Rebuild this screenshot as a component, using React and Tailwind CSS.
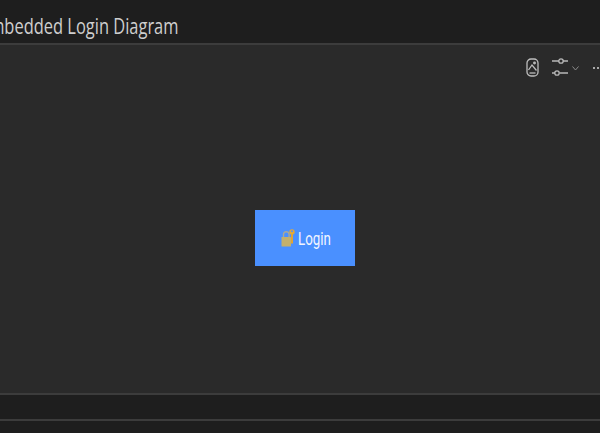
function PreviewIcon() {
  return (
    <svg width="13" height="19" viewBox="0 0 13 19" fill="none" stroke="#bdbdbd" strokeWidth="1.3">
      <rect x="1" y="1" width="11" height="17" rx="4" />
      <path d="M2.5 12 L6 7 L10.5 12.5" />
      <path d="M3.5 15 h6" />
      <circle cx="8.5" cy="5" r="0.8" />
    </svg>
  );
}

function SlidersIcon() {
  return (
    <svg width="16" height="18" viewBox="0 0 16 18" fill="none" stroke="#b8b8b8" strokeWidth="1.3">
      <path d="M0 3 H7 M11 3 H16" />
      <circle cx="9" cy="3" r="2.2" />
      <path d="M0 15 H3 M7.5 15 H16" />
      <circle cx="5" cy="15" r="2.2" />
    </svg>
  );
}

function ChevronIcon() {
  return (
    <svg width="7" height="5" viewBox="0 0 7 5" fill="none" stroke="#8a8a8a" strokeWidth="1">
      <path d="M0.5 0.5 L3.5 4 L6.5 0.5" />
    </svg>
  );
}

function LockKeyIcon() {
  return (
    <svg width="14" height="18" viewBox="0 0 14 18" className="shrink-0">
      <path d="M2.5 9 V5.5 a2.8 2.8 0 0 1 5.6 0 V9" fill="none" stroke="#a8a89a" strokeWidth="1.4" />
      <rect x="0.5" y="8" width="9.5" height="9.5" rx="0.5" fill="#c4b06c" />
      <circle cx="11" cy="3" r="2.7" fill="#e2a93a" />
      <circle cx="11" cy="2.2" r="0.9" fill="#4a90ff" />
      <rect x="10" y="5" width="2" height="9.5" fill="#dfa436" />
    </svg>
  );
}

export default function App() {
  return (
    <div className="flex h-[433px] w-[600px] flex-col overflow-hidden bg-[#1e1e1e] font-['Open_Sans','Noto_Sans',sans-serif]">
      <header className="flex h-[45px] shrink-0 items-end overflow-hidden border-b-2 border-[#3c3c3c] pb-[4px]">
        <h1 className="-ml-[20px] origin-left scale-x-[0.783] whitespace-nowrap text-[21px] leading-[26px] text-[#cfcfcf]">Embedded Login Diagram</h1>
      </header>
      <main className="flex min-h-0 flex-1 flex-col bg-[#2a2a2a]">
        <div className="flex h-[44px] shrink-0 items-center justify-end gap-[13px] overflow-hidden">
          <PreviewIcon />
          <div className="flex items-center gap-[4px]">
            <SlidersIcon />
            <span className="pt-[3px]"><ChevronIcon /></span>
          </div>
          <span className="-mr-[3px] ml-[1px] flex gap-[2px] pt-[2px]">
            <i className="h-[2px] w-[2px] bg-[#a8a8a8]" />
            <i className="h-[2px] w-[2px] bg-[#a8a8a8]" />
            <i className="h-[2px] w-[2px] bg-[#a8a8a8]" />
          </span>
        </div>
        <div className="flex flex-1 items-center justify-center pb-[7px] pl-[10px]">
          <button className="flex h-[56px] w-[100px] items-center gap-[3px] bg-[#4a90ff] pl-[26px] font-['Roboto',sans-serif] text-[18px] text-[#f2f6ff]">
            <LockKeyIcon />
            <span className="origin-left translate-y-[1px] scale-x-[0.74]">Login</span>
          </button>
        </div>
      </main>
      <div className="h-[28px] shrink-0 border-y-2 border-[#3c3c3c] bg-[#1e1e1e]" />
      <div className="h-[12px] shrink-0 bg-[#1e1e1e]" />
    </div>
  );
}
